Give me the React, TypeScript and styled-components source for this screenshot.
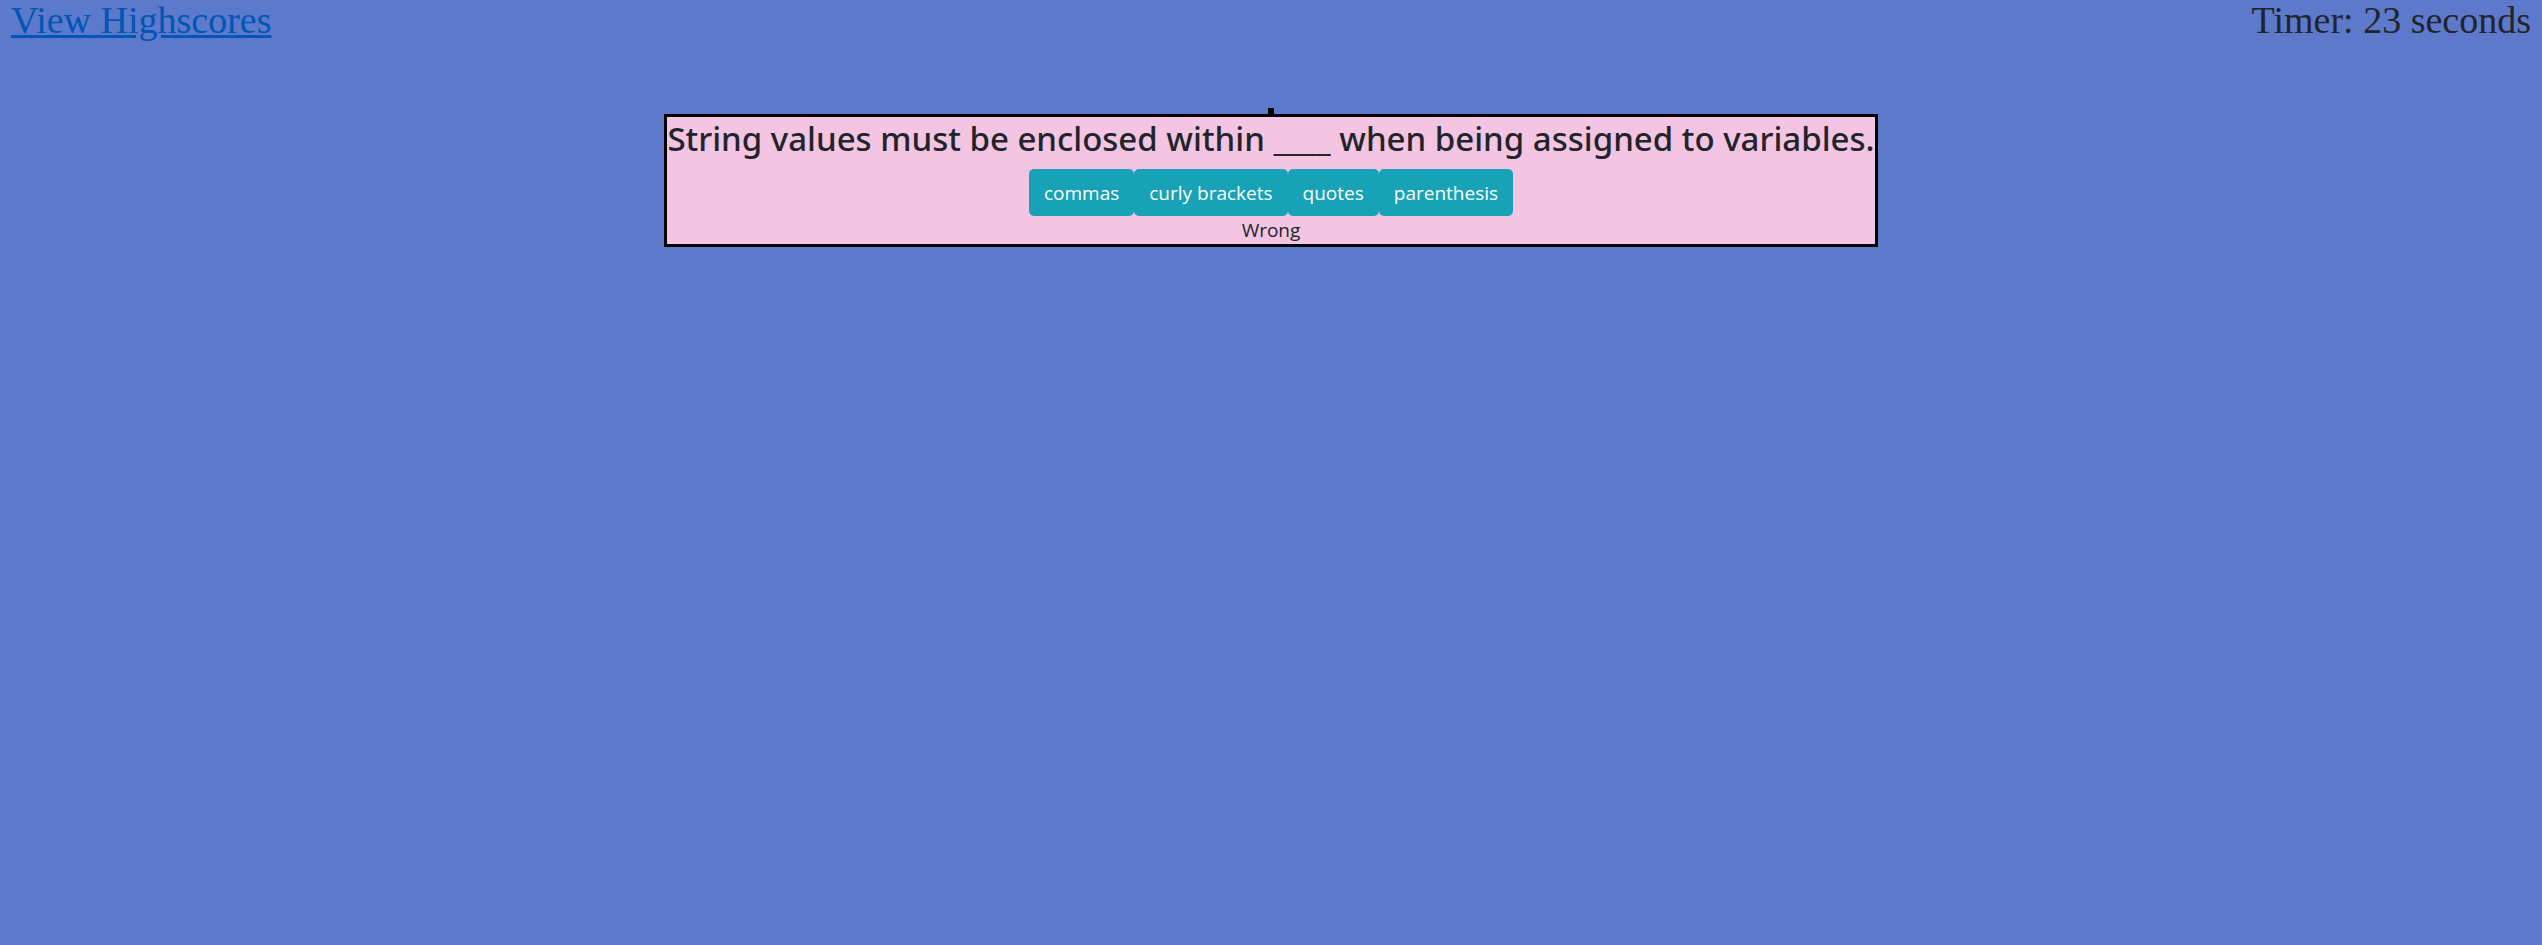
import React from "react";
import styled, { createGlobalStyle } from "styled-components";

const GlobalStyle = createGlobalStyle`
  *, *::before, *::after { box-sizing: border-box; }
  body {
    margin: 0;
    background: #5c79cc;
    color: #212529;
    font-family: "Segoe UI", "Open Sans", sans-serif;
    font-size: 19px;
    line-height: 28px;
  }
`;

const Header = styled.header`
  display: flex;
  justify-content: space-between;
  padding: 0 11px;
  font-family: "Times New Roman", "Liberation Serif", serif;
  font-size: 38px;
  line-height: 40px;
`;

const ScoresLink = styled.a`
  color: #0056b3;
  text-decoration: underline;
`;

const Main = styled.main`
  display: flex;
  flex-direction: column;
  align-items: center;
  padding-top: 68px;
`;

const Panel = styled.div`
  border: 3px solid #000;
  background: #f4c4e3;
`;

const QuestionPanel = styled(Panel)`
  display: flex;
  flex-direction: column;
  align-items: center;
  text-align: center;
`;

const Question = styled.h3`
  margin: 0 0 8px;
  font-family: "Segoe UI", "Noto Sans", sans-serif;
  font-size: 33px;
  font-weight: 500;
  line-height: 44px;
`;

const Answers = styled.div`
  display: flex;
  flex-wrap: wrap;
  justify-content: center;
`;

const AnswerButton = styled.button`
  height: 47px;
  padding: 0 15px;
  border: 0;
  border-radius: 5px;
  background: #17a2b8;
  color: #fff;
  font: inherit;
  cursor: pointer;
`;

const Result = styled.div`
  line-height: 28px;
`;

const answers = ["commas", "curly brackets", "quotes", "parenthesis"];

export default function App() {
  return (
    <>
      <GlobalStyle />
      <Header>
        <ScoresLink href="#highscores">View Highscores</ScoresLink>
        <span>Timer: 23 seconds</span>
      </Header>
      <Main>
        <Panel />
        <QuestionPanel>
          <Question>
            String values must be enclosed within ____ when being assigned to variables.
          </Question>
          <Answers>
            {answers.map((answer) => (
              <AnswerButton key={answer} type="button">{answer}</AnswerButton>
            ))}
          </Answers>
          <Result role="status">Wrong</Result>
        </QuestionPanel>
      </Main>
    </>
  );
}
